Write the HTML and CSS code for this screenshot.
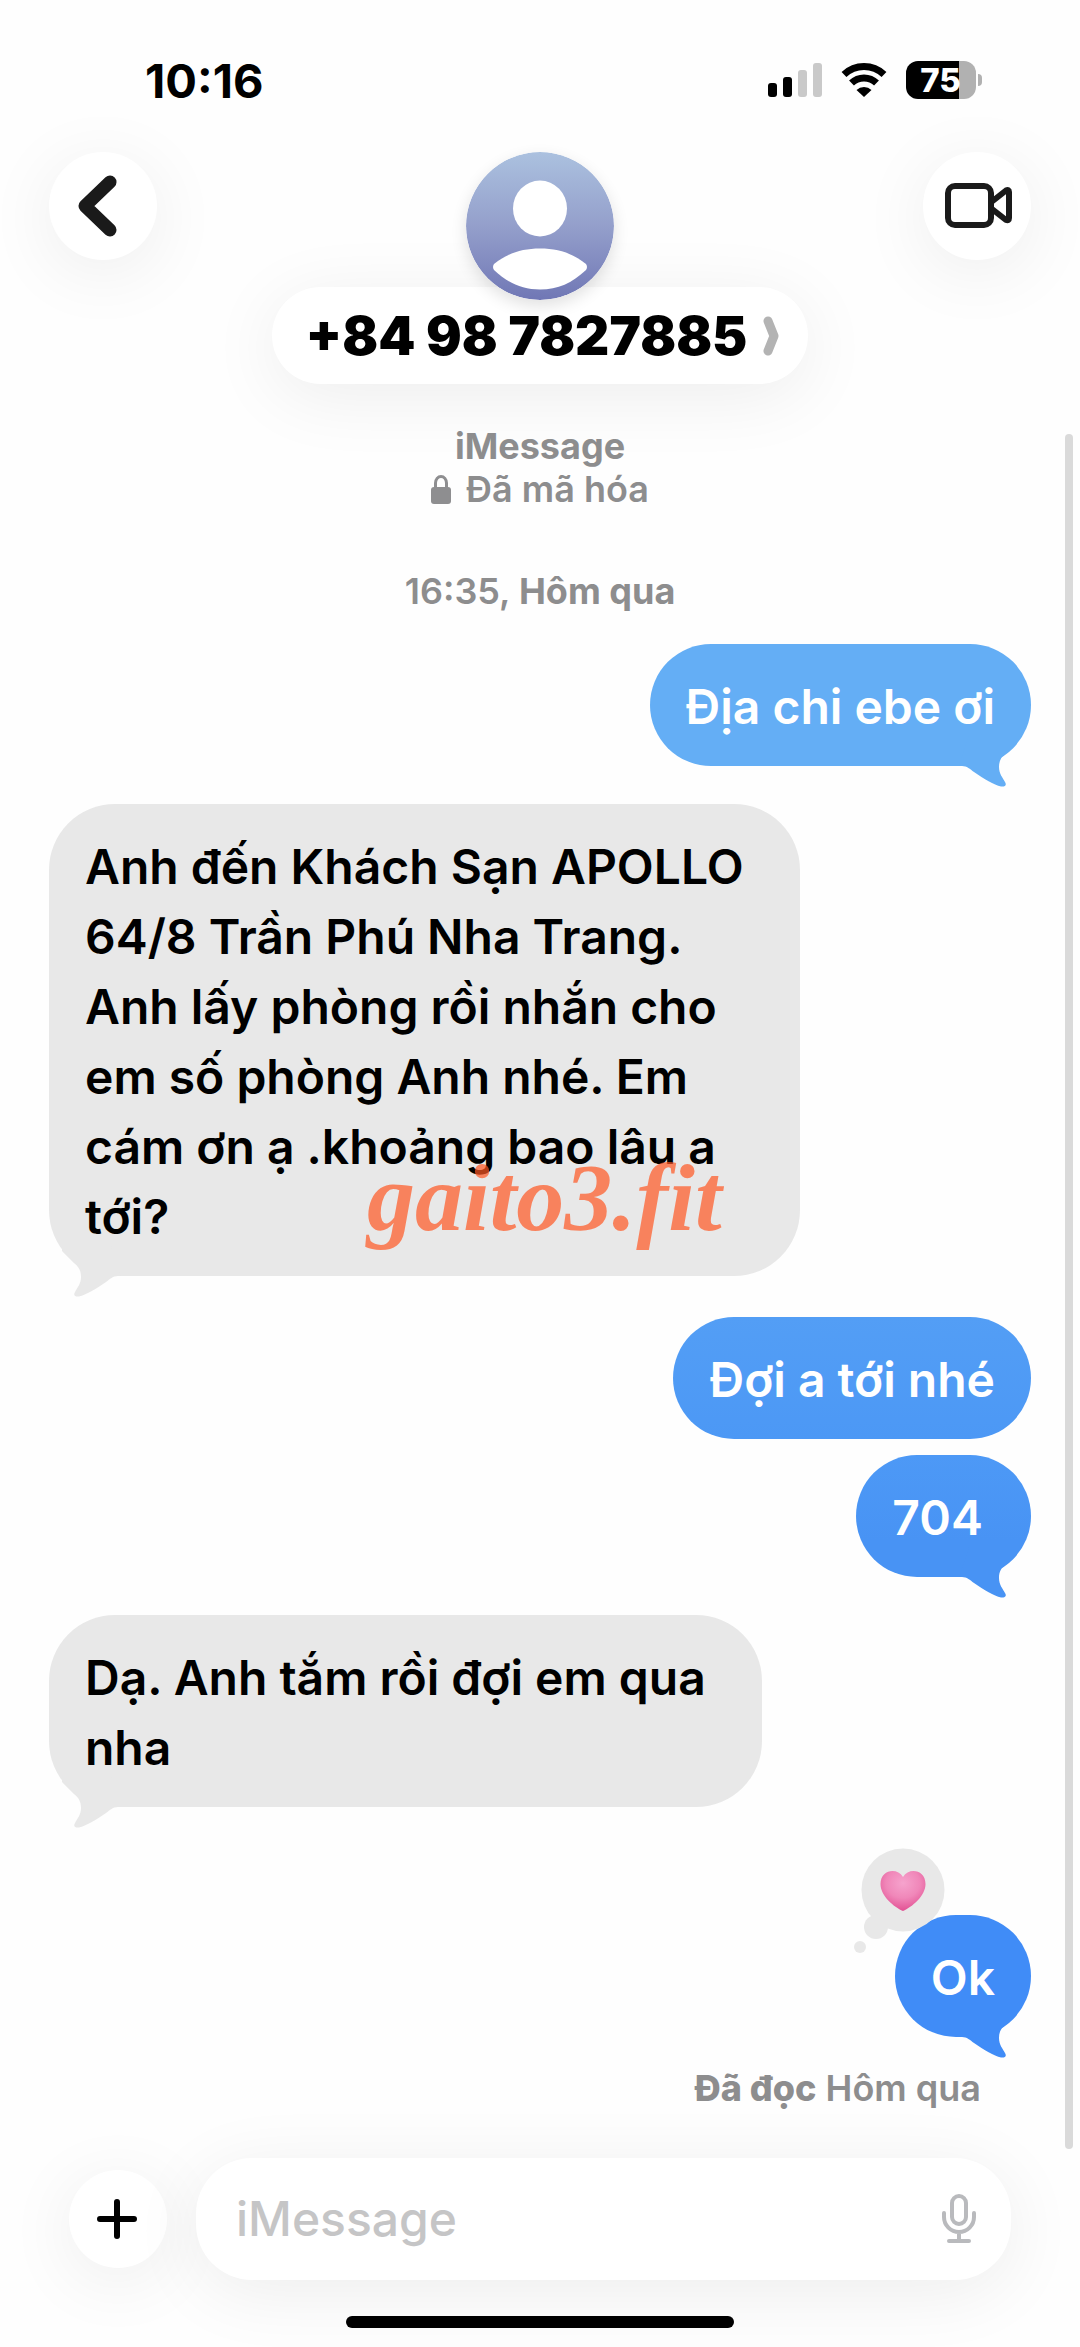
FILE: index.html
```html
<!DOCTYPE html>
<html lang="vi">
<head>
<meta charset="utf-8">
<meta name="viewport" content="width=device-width, initial-scale=1">
<title>+84 98 7827885</title>
<link rel="stylesheet" href="styles.css">
</head>
<body>
<svg class="defs" width="0" height="0" aria-hidden="true">
  <symbol id="tail" viewBox="0 0 72 52">
    <path d="M0 30H3C8 30 11 33 15 36C25 43 35 49 42 50.500C46 51 48 49 46 46C44 42 40 38 40 31C40 25 42 21 47 17L59 5V0H10Z"/>
  </symbol>
</svg>
<div class="screen">
  <div class="status">
    <time class="clock">10:16</time>
    <div class="indicators">
      <svg width="54" height="34" viewBox="0 0 54 34" aria-label="Signal">
        <rect x="0" y="20" width="9" height="14" rx="3"/>
        <rect x="15" y="14" width="9" height="20" rx="3"/>
        <rect x="30" y="7" width="9" height="27" rx="3" fill="#c9c9c9"/>
        <rect x="45" y="0" width="9" height="34" rx="3" fill="#c9c9c9"/>
      </svg>
      <svg width="46" height="34" viewBox="0 0 46 34" aria-label="Wi-Fi">
        <path d="M3 11.500A29 29 0 0 1 43 11.500M10.500 20A18 18 0 0 1 35.500 20" fill="none" stroke="#000" stroke-width="7"/>
        <path d="M15.500 27A11 11 0 0 1 30.500 27L23 34Z"/>
      </svg>
      <div class="battery"><span class="battery-level">75</span></div>
    </div>
  </div>

  <header class="header">
    <button class="round" aria-label="Back">
      <svg width="44" height="64" viewBox="0 0 44 64"><path d="M33 8L8 32L33 56" fill="none" stroke="#1a1a1a" stroke-width="13" stroke-linecap="round" stroke-linejoin="round"/></svg>
    </button>
    <div class="contact">
      <svg class="avatar" viewBox="0 0 148 148" aria-hidden="true">
        <defs><linearGradient id="sky" x2="0" y2="1"><stop offset="0" stop-color="#abc1df"/><stop offset=".5" stop-color="#949fcb"/><stop offset="1" stop-color="#7077b5"/></linearGradient></defs>
        <circle cx="74" cy="74" r="74" fill="url(#sky)"/>
        <ellipse cx="74" cy="56.500" rx="27" ry="28" fill="#fff"/>
        <path d="M28 112C42 101 56 96.500 74 96.500S106 101 120 112Q122 115 120 118C106 131 92 137.500 74 137.500S42 131 28 118Q26 115 28 112Z" fill="#fff"/>
      </svg>
      <button class="name">+84 98 7827885
        <svg width="17" height="40" viewBox="0 0 17 40"><path d="M5 5L11 20L5 35" fill="none" stroke="#b3b3b3" stroke-width="9" stroke-linecap="round" stroke-linejoin="round"/></svg>
      </button>
    </div>
    <button class="round" aria-label="Video">
      <svg width="68" height="46" viewBox="0 0 68 46" fill="none" stroke="#1a1a1a" stroke-width="6" stroke-linejoin="round"><rect x="3" y="3" width="43" height="39" rx="7"/><path d="M47 18.500L61 7.500Q64 6 64 9V35Q64 38 61 37L47 26"/></svg>
    </button>
  </header>

  <main class="thread">
    <p class="note"><b>iMessage</b>
      <span class="secure"><svg width="20" height="30" viewBox="0 0 20 30"><rect y="12" width="20" height="17" rx="3" fill="#8e8e90"/><path d="M4.500 14V8A5.500 6.500 0 0 1 15.500 8V14" fill="none" stroke="#8e8e90" stroke-width="3"/></svg>Đã mã hóa</span>
    </p>
    <p class="note stamp">16:35, <b>Hôm qua</b></p>

    <div class="bubble sent sky">Địa chi ebe ơi<svg class="tail"><use href="#tail"/></svg></div>
    <div class="bubble received">Anh đến Khách Sạn APOLLO<br>64/8 Trần Phú Nha Trang.<br>Anh lấy phòng rồi nhắn cho<br>em số phòng Anh nhé. Em<br>cám ơn ạ .khoảng bao lâu a<br>tới?<svg class="tail"><use href="#tail"/></svg><span class="watermark">gaito3.fit</span></div>
    <div class="bubble sent azure">Đợi a tới nhé</div>
    <div class="bubble sent blue follow">704&nbsp;<svg class="tail"><use href="#tail"/></svg></div>
    <div class="bubble received">Dạ. Anh tắm rồi đợi em qua<br>nha<svg class="tail"><use href="#tail"/></svg></div>
    <div class="bubble sent deep reacted">Ok<svg class="tail"><use href="#tail"/></svg>
      <svg class="reaction" viewBox="0 0 92 106" aria-label="Heart">
        <defs><radialGradient id="pink" cx=".5" cy=".3" r=".75"><stop offset="0" stop-color="#f6a3cd"/><stop offset=".5" stop-color="#f087b9"/><stop offset="1" stop-color="#e0488d"/></radialGradient></defs>
        <g fill="#e8e8e8"><circle cx="49" cy="42" r="41.500"/><circle cx="22" cy="79" r="12"/><circle cx="6" cy="99" r="6"/></g>
        <path d="M49 63C40 59 26.500 48 26.500 36C26.500 22 43 19 49 29C55 19 71.500 22 71.500 36C71.500 48 58 59 49 63Z" fill="url(#pink)"/>
      </svg>
    </div>
    <p class="receipt"><b>Đã đọc</b> Hôm qua</p>
  </main>

  <form class="composer">
    <button class="plus" type="button" aria-label="Add">
      <svg width="40" height="40" viewBox="0 0 40 40"><path d="M20 3V37M3 20H37" stroke="#000" stroke-width="6" stroke-linecap="round"/></svg>
    </button>
    <label class="field">
      <input type="text" placeholder="iMessage" aria-label="iMessage">
      <svg width="34" height="50" viewBox="0 0 34 50" fill="none" stroke="#b9babd" stroke-width="4" stroke-linecap="round"><rect x="10" y="2" width="14" height="28" rx="7"/><path d="M2 19V23A15 15 0 0 0 32 23V19M17 38V46M7 47H27"/></svg>
    </label>
  </form>
  <div class="home"></div>
  <div class="scrollbar"></div>
</div>
</body>
</html>
```
FILE: styles.css
```css
* { box-sizing: border-box; }

body {
  margin: 0;
  background: #fefefe;
  color: #000;
  font-family: Inter, "Noto Sans", sans-serif;
}

p { margin: 0; }
svg { display: block; flex: none; }
.defs { position: absolute; }
button { border: 0; padding: 0; color: inherit; font: inherit; background: #fff; }

.screen {
  position: relative;
  display: flex;
  flex-direction: column;
  min-height: 100vh;
  overflow: hidden;
}

/* status bar */
.status {
  display: flex;
  justify-content: space-between;
  align-items: center;
  height: 152px;
  padding: 8px 98px 0 145px;
}
.clock { font-size: 47px; font-weight: 700; }
.indicators { display: flex; align-items: center; gap: 19px; }
.battery {
  position: relative;
  width: 70px;
  height: 38px;
  margin-right: 6px;
  border-radius: 12px;
  background: linear-gradient(90deg, #000 75%, #b1b1b1 75%);
}
.battery::after {
  content: "";
  position: absolute;
  left: 72px;
  top: 13px;
  width: 4px;
  height: 12px;
  border-radius: 0 4px 4px 0;
  background: #b1b1b1;
}
.battery-level {
  display: block;
  padding-right: 1px;
  color: #fff;
  font-size: 33px;
  font-weight: 800;
  line-height: 38px;
  text-align: center;
}

/* contact header */
.header {
  display: flex;
  justify-content: space-between;
  align-items: flex-start;
  padding: 0 49px;
}
.round, .plus {
  display: flex;
  flex: none;
  justify-content: center;
  align-items: center;
  width: 108px;
  height: 108px;
  border-radius: 50%;
}
.round, .name, .plus, .field { box-shadow: 0 12px 72px rgba(0, 0, 0, .07); }
.round:first-child { padding-right: 8px; }
.round:last-child { padding-left: 4px; }
.contact { display: flex; flex-direction: column; align-items: center; }
.avatar {
  position: relative;
  width: 148px;
  height: 148px;
  border-radius: 50%;
  box-shadow: 0 6px 16px rgba(0, 0, 0, .12);
}
.name {
  display: flex;
  align-items: center;
  gap: 16px;
  height: 97px;
  margin-top: -13px;
  padding: 0 28px 0 34px;
  border-radius: 49px;
  font-size: 53px;
  font-weight: 900;
}

/* conversation */
.thread {
  display: flex;
  flex-direction: column;
  padding: 41px 49px 48px;
}
.note, .receipt {
  color: #8d8d8e;
  font-size: 36px;
  font-weight: 600;
  line-height: 43px;
  text-align: center;
}
.note b { font-weight: 700; }
.secure { display: flex; justify-content: center; align-items: center; gap: 15px; }
.stamp { margin-top: 59px; }

.bubble {
  position: relative;
  width: fit-content;
  margin-top: 38px;
  padding: 28px 36px 24px;
  border-radius: 66px;
  font-size: 48px;
  font-weight: 600;
  line-height: 70px;
}
.sent { align-self: flex-end; border-radius: 61px; color: #fff; }
.received { padding-right: 56px; background: #e8e8e8; fill: #e8e8e8; }
.sky { margin-top: 31px; background: #64aef5; fill: #64aef5; }
.azure { margin-top: 41px; background: linear-gradient(#539ef5, #4c98f5); }
.blue { background: linear-gradient(#4d99f6, #4893f4 70%); fill: #4893f4; }
.deep { background: #408cf7; fill: #408cf7; }
.follow { margin-top: 16px; }
.reacted { margin-top: 108px; }

.tail { position: absolute; right: 0; bottom: -22px; width: 72px; height: 52px; }
.received .tail { right: auto; left: 0; transform: scaleX(-1); }

.reaction { position: absolute; left: -41px; top: -67px; width: 92px; height: 106px; }

.watermark {
  position: absolute;
  left: 318px;
  bottom: 28px;
  color: rgba(255, 87, 34, .7);
  font: italic 700 96px/100px "Liberation Serif", serif;
}

.receipt { margin-top: 30px; padding-right: 50px; text-align: right; }
.receipt b { font-weight: 800; }

/* message composer */
.composer {
  display: flex;
  align-items: center;
  gap: 29px;
  margin-top: auto;
  padding: 0 69px;
}
.plus { width: 98px; height: 98px; padding-right: 2px; }
.field {
  display: flex;
  flex: 1;
  align-items: center;
  min-width: 0;
  height: 122px;
  padding: 0 35px 0 40px;
  border-radius: 56px;
  background: #fff;
}
.field input {
  flex: 1;
  min-width: 0;
  padding: 0;
  border: 0;
  outline: 0;
  background: none;
  font: 500 48px/60px Inter, "Noto Sans", sans-serif;
}
.field input::placeholder { color: #c5c5c6; opacity: 1; }

.home {
  align-self: center;
  width: 36%;
  height: 12px;
  margin: 36px 0 20px;
  border-radius: 6px;
  background: #000;
}
.scrollbar {
  position: absolute;
  top: 434px;
  right: 7px;
  bottom: 199px;
  width: 8px;
  border-radius: 4px;
  background: #dadada;
}
```
